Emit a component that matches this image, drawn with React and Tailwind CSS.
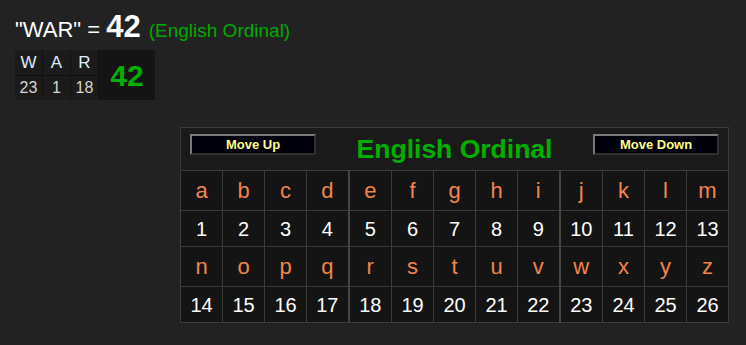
const LETTERS = "abcdefghijklmnopqrstuvwxyz".split("");

// first row a–m, second row n–z
const ROWS = [LETTERS.slice(0, 13), LETTERS.slice(13)];

// column widths, the 5th and 10th include the heavier divider
const COLS = [42, 42, 42, 42, 43, 42, 42, 42, 42, 43, 42, 42, 42];

const WORD = [
  { ch: "W", val: 23 },
  { ch: "A", val: 1 },
  { ch: "R", val: 18 },
];

const Bevel = ({ children }) => (
  <button className="w-[126px] h-[21px] mt-[6px] bg-[#00000a] border-2 border-t-[#7a7a7a] border-l-[#7a7a7a] border-b-[#303030] border-r-[#303030] text-[#ffff90] font-bold text-[13px] leading-none">
    {children}
  </button>
);

const Cell = ({ children, thick, letter }) => (
  <td
    className={
      "text-center border border-[#3c3c3c] bg-[#141414] " +
      (thick ? "border-r-2 border-r-[#444] " : "") +
      (letter ? "h-[40px] text-[22px] text-[#f2844e]" : "h-[36px] text-[20px] text-white")
    }
  >
    {children}
  </td>
);

export default function App() {
  return (
    <div
      className="w-[746px] h-[345px] bg-[#222] overflow-hidden pt-[11px] px-[15px]"
      style={{ fontFamily: '"Liberation Sans", Arial, sans-serif' }}
    >
      <div className="flex items-baseline h-[30px]">
        <span className="text-[22px] text-white">"WAR" =&nbsp;</span>
        <span className="text-[31px] font-bold text-white leading-none">42</span>
        <span className="text-[19px] text-[#00aa00] ml-[8px]">(English Ordinal)</span>
      </div>

      <div className="mt-[9px] flex w-[140px] h-[50px] bg-[#111]">
        {WORD.map((w) => (
          <div key={w.ch} className="flex flex-col w-[27px] mr-px">
            <div className="h-[25px] bg-[#1b1b1b] flex items-center justify-center text-[17px] text-[#dcecff]">
              {w.ch}
            </div>
            <div className="h-[24px] mt-px bg-[#1b1b1b] flex items-center justify-center text-[16px] text-[#d6d6d6]">
              {w.val}
            </div>
          </div>
        ))}
        <div className="flex-1 bg-[#141414] flex items-center justify-center text-[30px] font-bold text-[#00b000]">
          42
        </div>
      </div>

      <table className="mt-[27px] ml-[165px] w-[548px] table-fixed border-collapse border border-[#444]">
        <colgroup>
          {COLS.map((w, i) => (
            <col key={i} style={{ width: w }} />
          ))}
        </colgroup>
        <tbody>
          <tr>
            <td colSpan={13} className="h-[43px] p-0 align-top bg-[#1a1a1a] border border-[#3c3c3c] px-[9px]">
              <div className="flex items-start justify-between h-[42px]">
                <Bevel>Move Up</Bevel>
                <span className="self-center text-[26.5px] font-bold text-[#00b000] leading-none">English Ordinal</span>
                <Bevel>Move Down</Bevel>
              </div>
            </td>
          </tr>
          {ROWS.map((row, r) => (
            <>
              <tr key={"l" + r}>
                {row.map((ch, i) => (
                  <Cell key={ch} letter thick={i === 3 || i === 8}>
                    {ch}
                  </Cell>
                ))}
              </tr>
              <tr key={"n" + r}>
                {row.map((ch, i) => (
                  <Cell key={ch} thick={i === 3 || i === 8}>
                    {r * 13 + i + 1}
                  </Cell>
                ))}
              </tr>
            </>
          ))}
        </tbody>
      </table>
    </div>
  );
}
